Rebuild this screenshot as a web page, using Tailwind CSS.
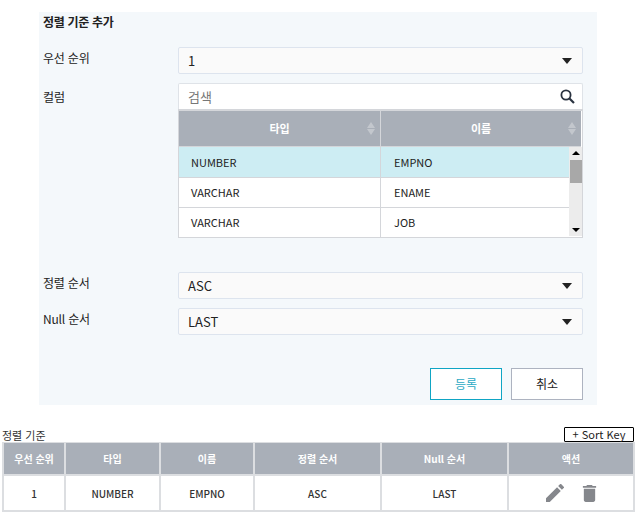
<!DOCTYPE html>
<html lang="ko">

<head>
    <meta charset="UTF-8" />
    <title>정렬 기준</title>
    <script src="https://cdn.jsdelivr.net/npm/@tailwindcss/browser@4"></script>
</head>

<body class="bg-white font-['Noto_Sans_CJK_KR','Noto_Sans',sans-serif] text-[#222]">
    <div class="w-[638px] h-[513px] overflow-hidden">
        <div class="ml-[39px] mt-[12px] w-[558px] h-[393px] bg-[#f4f8fb] pl-[4px] pr-[14px] flex flex-col">
            <div class="h-[35px] text-[12px] leading-[20px] font-bold tracking-[-0.3px]">정렬 기준 추가</div>

            <div class="flex h-[27px]">
                <div class="w-[135px] text-[12px] leading-[22px] tracking-[-0.2px]">우선 순위</div>
                <div class="w-[405px] flex items-center justify-between pl-[9px] pr-[10px] pt-[1px] bg-[#fafafa] border border-[#dde4ee] rounded-[2px] text-[13px]">
                    <span>1</span>
                    <span class="w-0 h-0 border-x-[5px] border-x-transparent border-t-[6px] border-t-[#222]"></span>
                </div>
            </div>

            <div class="flex mt-[9px]">
                <div class="w-[135px] text-[12px] leading-[28px]">컬럼</div>
                <div class="w-[405px]">
                    <div class="h-[26px] flex items-center justify-between pl-[9px] pr-[7px] bg-white border border-b-0 border-[#dfe3e8] rounded-t-[2px] text-[13px] text-[#777]">
                        <span>검색</span>
                        <svg width="15" height="15" viewBox="0 0 15 15" fill="none" stroke="#2a3340" stroke-width="1.8">
                            <circle cx="6" cy="6" r="4.6" />
                            <path d="M9.5 9.5 L14 14" stroke-width="2.2" />
                        </svg>
                    </div>
                    <div class="relative h-[129px] bg-white border border-[#d4d6da] border-t-2 text-[11px] overflow-hidden">
                        <div class="flex h-[36px] bg-[#a9afb8] text-white font-bold border-b border-[#d4d6da] mr-[1px]">
                            <div class="w-[202px] flex items-center justify-center relative border-r border-[#d4d6da]">
                                타입
                                <span class="absolute right-[5px] top-[11px] flex flex-col gap-[1px]">
                                    <span class="w-0 h-0 border-x-[4px] border-x-transparent border-b-[6px] border-b-[#c3c7cd]"></span>
                                    <span class="w-0 h-0 border-x-[4px] border-x-transparent border-t-[6px] border-t-[#c3c7cd]"></span>
                                </span>
                            </div>
                            <div class="flex-1 flex items-center justify-center relative">
                                이름
                                <span class="absolute right-[5px] top-[11px] flex flex-col gap-[1px]">
                                    <span class="w-0 h-0 border-x-[4px] border-x-transparent border-b-[6px] border-b-[#c3c7cd]"></span>
                                    <span class="w-0 h-0 border-x-[4px] border-x-transparent border-t-[6px] border-t-[#c3c7cd]"></span>
                                </span>
                            </div>
                        </div>
                        <div class="flex h-[31px] bg-[#cdedf3] border-b border-[#d4d6da] pr-[13px]">
                            <div class="w-[202px] pl-[12px] flex items-center border-r border-[#d4d6da]">NUMBER</div>
                            <div class="pl-[13px] flex items-center">EMPNO</div>
                        </div>
                        <div class="flex h-[30px] border-b border-[#d4d6da] pr-[13px]">
                            <div class="w-[202px] pl-[12px] flex items-center border-r border-[#d4d6da]">VARCHAR</div>
                            <div class="pl-[13px] flex items-center">ENAME</div>
                        </div>
                        <div class="flex h-[29px]">
                            <div class="w-[202px] pl-[12px] flex items-center border-r border-[#d4d6da]">VARCHAR</div>
                            <div class="pl-[13px] flex items-center">JOB</div>
                        </div>
                        <div class="absolute right-0 top-[36px] bottom-[1px] w-[13px] bg-[#ececec] flex flex-col items-center justify-between pt-[4px] pb-[4px]">
                            <span class="w-0 h-0 border-x-[4px] border-x-transparent border-b-[4px] border-b-black"></span>
                            <span class="absolute left-[1px] top-[13px] w-[12px] h-[23px] bg-[#a8a8a8]"></span>
                            <span class="w-0 h-0 border-x-[4px] border-x-transparent border-t-[4px] border-t-black"></span>
                        </div>
                    </div>
                </div>
            </div>

            <div class="flex h-[27px] mt-[34px]">
                <div class="w-[135px] text-[12px] leading-[22px] tracking-[-0.2px]">정렬 순서</div>
                <div class="w-[405px] flex items-center justify-between pl-[9px] pr-[10px] pt-[1px] bg-[#fafafa] border border-[#dde4ee] rounded-[2px] text-[13px]">
                    <span>ASC</span>
                    <span class="w-0 h-0 border-x-[5px] border-x-transparent border-t-[6px] border-t-[#222]"></span>
                </div>
            </div>

            <div class="flex h-[27px] mt-[9px]">
                <div class="w-[135px] text-[12px] leading-[22px] tracking-[-0.2px]">Null 순서</div>
                <div class="w-[405px] flex items-center justify-between pl-[9px] pr-[10px] pt-[1px] bg-[#fafafa] border border-[#dde4ee] rounded-[2px] text-[13px]">
                    <span>LAST</span>
                    <span class="w-0 h-0 border-x-[5px] border-x-transparent border-t-[6px] border-t-[#222]"></span>
                </div>
            </div>

            <div class="flex justify-end gap-[9px] mt-[33px]">
                <button class="w-[72px] h-[32px] bg-white border border-[#0fa5c4] text-[#2aa9c4] text-[12px]">등록</button>
                <button class="w-[72px] h-[32px] bg-white border border-[#adb3c0] text-[12px]">취소</button>
            </div>
        </div>

        <div class="relative h-[37px]">
            <div class="absolute left-[2px] top-[22px] text-[11px] leading-[16px] text-[#333]">정렬 기준</div>
            <button class="absolute left-[564px] top-[22px] w-[70px] h-[15px] bg-white border border-black rounded-[1px] text-[11px] leading-[13px]">+ Sort Key</button>
        </div>

        <div class="ml-[2px] w-[633px] border-2 border-t-1 border-[#dcdee1] text-[10px]">
            <div class="flex h-[33px] bg-[#a9afb8] text-white font-bold border-b-2 border-[#dcdee1]">
                <div class="w-[60px] flex items-center justify-center">우선 순위</div>
                <div class="w-[95px] flex items-center justify-center border-l-2 border-[#dcdee1]">타입</div>
                <div class="w-[94px] flex items-center justify-center border-l-2 border-[#dcdee1]">이름</div>
                <div class="w-[127px] flex items-center justify-center border-l-2 border-[#dcdee1]">정렬 순서</div>
                <div class="w-[127px] flex items-center justify-center border-l-2 border-[#dcdee1]">Null 순서</div>
                <div class="flex-1 flex items-center justify-center border-l-2 border-[#dcdee1]">액션</div>
            </div>
            <div class="flex h-[34px] font-medium text-[#333]">
                <div class="w-[60px] flex items-center justify-center">1</div>
                <div class="w-[95px] flex items-center justify-center border-l-2 border-[#dcdee1]">NUMBER</div>
                <div class="w-[94px] flex items-center justify-center border-l-2 border-[#dcdee1]">EMPNO</div>
                <div class="w-[127px] flex items-center justify-center border-l-2 border-[#dcdee1]">ASC</div>
                <div class="w-[127px] flex items-center justify-center border-l-2 border-[#dcdee1]">LAST</div>
                <div class="flex-1 flex items-center justify-center gap-[18px] border-l-2 border-[#dcdee1]">
                    <svg width="18" height="18" viewBox="3 3 18 18" fill="#85878c">
                        <path d="M3 17.25V21h3.75L17.81 9.94l-3.75-3.75L3 17.25zM20.71 7.04a1 1 0 0 0 0-1.41l-2.34-2.34a1 1 0 0 0-1.41 0l-1.83 1.83 3.75 3.75 1.83-1.83z" />
                    </svg>
                    <svg width="15" height="17" viewBox="5 3 14 18" fill="#85878c">
                        <path d="M6 19c0 1.1.9 2 2 2h8c1.1 0 2-.9 2-2V7H6v12zM19 4h-3.5l-1-1h-5l-1 1H5v2h14V4z" />
                    </svg>
                </div>
            </div>
        </div>
    </div>
</body>

</html>
